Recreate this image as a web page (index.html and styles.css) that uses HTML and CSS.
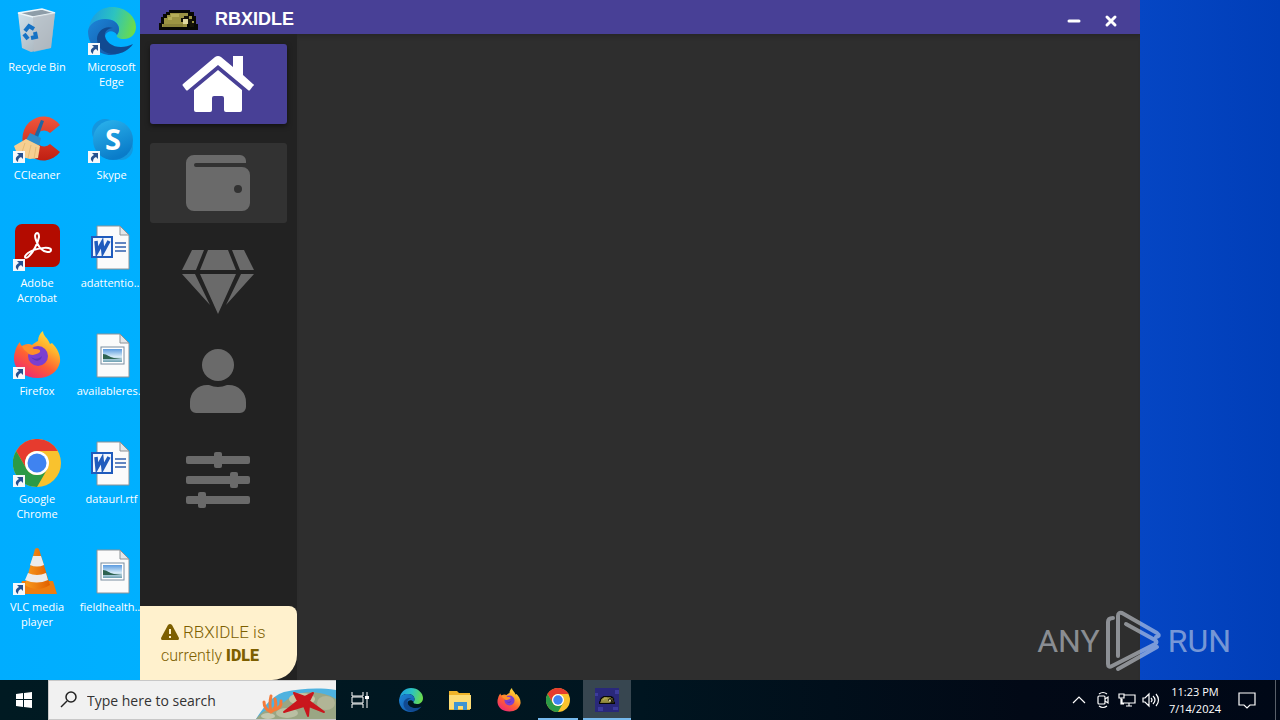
FILE: index.html
```html
<!DOCTYPE html>
<html lang="en">
<head>
<meta charset="utf-8">
<title>RBXIDLE</title>
<link rel="stylesheet" href="styles.css">
</head>
<body>
<svg class="defs" aria-hidden="true">
  <defs>
    <linearGradient id="edgeTop" x1="0" y1="0.3" x2="1" y2="0.5"><stop offset="0" stop-color="#1b9de2"/><stop offset=".5" stop-color="#2cc3c0"/><stop offset="1" stop-color="#6bdc4a"/></linearGradient>
    <linearGradient id="edgeMid" x1="0" y1="0" x2="1" y2="1"><stop offset="0" stop-color="#1d86d8"/><stop offset="1" stop-color="#1254a4"/></linearGradient>
    <linearGradient id="foxBody" x1="0.9" y1="0" x2="0.3" y2="1"><stop offset="0" stop-color="#fff04a"/><stop offset=".35" stop-color="#ffb02c"/><stop offset=".65" stop-color="#ff5f33"/><stop offset="1" stop-color="#ee2a72"/></linearGradient>
    <linearGradient id="skype" x1="0" y1="0" x2="0.4" y2="1"><stop offset="0" stop-color="#2cb5ee"/><stop offset="1" stop-color="#0a7cc9"/></linearGradient>
    <linearGradient id="bin" x1="0" y1="0" x2="1" y2="1"><stop offset="0" stop-color="#d3e4ee"/><stop offset="1" stop-color="#9fa9b1"/></linearGradient>
    <linearGradient id="photo" x1="0" y1="0" x2="0" y2="1"><stop offset="0" stop-color="#5b9be0"/><stop offset=".6" stop-color="#d8ecf8"/><stop offset="1" stop-color="#6d9fb0"/></linearGradient>
    <linearGradient id="cone" x1="0" y1="0" x2="1" y2="0"><stop offset="0" stop-color="#f99a1c"/><stop offset="1" stop-color="#e05f00"/></linearGradient>
    <linearGradient id="red" x1="0" y1="0" x2="0" y2="1"><stop offset="0" stop-color="#f0563c"/><stop offset="1" stop-color="#c01f12"/></linearGradient>
    <symbol id="i-edge" viewBox="0 0 48 48">
      <path d="M1 22C2 9 12 0 24 0c14 0 24 10 24 20 0 8-6 12-12 12-5 0-8-2-7-4 1-2 2-3 2-6 0-6-6-10-13-10C9 12 3 16 1 22z" fill="url(#edgeTop)"/>
      <path d="M0 24c1-7 8-12 17-12 8 0 14 4 14 10 0 3-1 4-2 6-3-5-10-5-12 1-2 9 5 17 15 17-3 1-6 2-9 2C10 48 0 38 0 24z" fill="url(#edgeMid)"/>
      <path d="M17 29c-1-4 3-8 8-8-8-3-16 3-16 11 0 9 8 15 17 15 8 0 15-4 19-10-4 2-8 3-12 3-9 0-15-5-16-11z" fill="#114a91"/>
    </symbol>
    <symbol id="i-chrome" viewBox="0 0 48 48">
      <circle cx="24" cy="24" r="24" fill="#f9c22e"/>
      <path d="M3.200 12A24 24 0 0 1 44.800 12H24a12 12 0 0 0-10.400 18z" fill="#e63b2e"/>
      <path d="M3.200 12A24 24 0 0 0 24 48l10.400-18a12 12 0 0 1-20.800 0z" fill="#2b9a47"/>
      <circle cx="24" cy="24" r="12" fill="#fff"/><circle cx="24" cy="24" r="9.500" fill="#3f83f0"/>
    </symbol>
    <symbol id="i-firefox" viewBox="0 0 48 48">
      <path d="M2 21c1-5 3-8 5-10 0 2 1 3 2 4 3-2 7-3 10-1 2-2 4-3 6-4 0-4 2-8 5-10 0 5 5 7 7 13l2-1c5 5 9 12 8 19-2 10-11 16-22 16C11 47 2 39 1 29c0-3 0-6 1-8z" fill="url(#foxBody)"/>
      <circle cx="25" cy="25" r="10" fill="#7b3fd0"/>
      <path d="M9 15c5-1 9 1 12 3 3 0 7 0 6 3-2 2-5 2-7 3-3 0-5-1-6-3-2-1-4-3-5-6z" fill="#ff8f2a"/>
      <path d="M18 26c4 3 8 2 11-1-1 5-6 7-11 1z" fill="#5b35b8"/>
    </symbol>
    <symbol id="i-doc" viewBox="0 0 48 48">
      <path d="M9 3h23l9 9v34H9z" fill="#fbfbfb" stroke="#8c9297" stroke-width="1"/>
      <path d="M32 3v9h9z" fill="#e3e6e8" stroke="#8c9297" stroke-width="1"/>
    </symbol>
    <symbol id="i-word" viewBox="0 0 48 48">
      <use href="#i-doc"/>
      <path d="M27 20h11M27 24h11M27 28h11" stroke="#2f5fae" stroke-width="1.500"/>
      <rect x="3" y="13" width="22" height="22" fill="#1f5bbd"/><rect x="5" y="15" width="18" height="18" fill="#f2f6fc"/>
      <path d="M8 18l1 11 5-9 1 9 6-11" fill="none" stroke="#1f5bbd" stroke-width="3.500"/>
    </symbol>
    <symbol id="i-image" viewBox="0 0 48 48">
      <use href="#i-doc"/>
      <rect x="13" y="16" width="23" height="17" fill="#fff" stroke="#7a8da0" stroke-width="1"/>
      <rect x="15" y="18" width="19" height="13" fill="url(#photo)"/>
      <path d="M15 23c4 0 6 3 11 4l8 1H15z" fill="#2d6250"/>
    </symbol>
    <symbol id="i-shortcut" viewBox="0 0 12 12">
      <path d="M0 0h12v12H0z" fill="#f5f8fb"/><path d="M4 2h6v6L8 6c-2 1-3 2-3 5C2 9 2 6 6 4z" fill="#26518f"/>
    </symbol>
    <symbol id="i-hat" viewBox="0 0 39 22">
      <path d="M10 1h21v2h4v4h2v8h2v6H0v-7h2V8h2V5h3V3h3z" fill="#080805"/>
      <path d="M11 4h18v3h4v5h2v6h-4v-3h-3v3H3v-3h2V9h3V6h3z" fill="#9c9443"/>
      <path d="M12 5h8v3h-7v3H9V8h3z" fill="#b5ad58"/>
      <path d="M22 9h3V7h5v3h3v4h2v4h-4v-3h-6v-2h-3z" fill="#151307"/>
      <path d="M24 10h5v5h-5z" fill="#e0d8a0"/><path d="M4 15h20v3H4z" fill="#8a833b"/>
    </symbol>
  </defs>
</svg>

<main class="desktop">
  <ul class="shortcuts">
    <li><span class="pic"><svg viewBox="0 0 48 48"><path d="M5 6l24-4 13 4-4 35-20 4-9-4z" fill="url(#bin)"/><path d="M5 6l15 4 22-4-13-4z" fill="#8e9da8" stroke="#eef6fa" stroke-width="1.500"/><path d="M20 10l22-4-4 35-17 4z" fill="#b6bdc3" opacity=".6"/><g fill="none" stroke="#1672c4" stroke-width="4"><path d="M12 24l4-5 5 3"/><path d="M22 25l1 5-5 1"/><path d="M15 32l-4-5"/></g></svg></span>Recycle Bin</li>
    <li><span class="pic"><svg><use href="#i-edge"/></svg><svg class="badge"><use href="#i-shortcut"/></svg></span>Microsoft Edge</li>
    <li><span class="pic"><svg viewBox="0 0 48 48"><path d="M47 10A21 22 0 1 0 47 37L37 29A8 8 0 1 1 37 18z" fill="url(#red)"/><path d="M28 5l3 1-7 19-4-1z" fill="#2166a2"/><path d="M17 18l11 5-2 8-13-6z" fill="#2f8dcb"/><path d="M13 24l14 7-2 12-8 1-12-3-4-10z" fill="#f6cf91"/><path d="M12 28l-4 12M18 30l-3 13M23 32l-2 12" stroke="#e6bb77" stroke-width="1"/></svg><svg class="badge"><use href="#i-shortcut"/></svg></span>CCleaner</li>
    <li><span class="pic"><svg viewBox="0 0 48 48"><circle cx="17" cy="17" r="13" fill="#1596de"/><circle cx="33" cy="33" r="12" fill="#1299e0"/><circle cx="25" cy="25" r="20" fill="url(#skype)"/><text x="25" y="35" class="skype-s">S</text></svg><svg class="badge"><use href="#i-shortcut"/></svg></span>Skype</li>
    <li><span class="pic"><svg viewBox="0 0 48 48"><rect x="2" y="1" width="45" height="43" rx="7" fill="#b30b00"/><path d="M24 10c-4 1-1 9 3 15 5 5 11 5 11 2 0-4-16-2-23 3-5 4-3 6 0 4 5-4 10-14 11-20 0-3-1-4-2-4z" fill="none" stroke="#fff" stroke-width="2"/></svg><svg class="badge"><use href="#i-shortcut"/></svg></span>Adobe Acrobat</li>
    <li><span class="pic"><svg><use href="#i-word"/></svg></span>adattentio...</li>
    <li><span class="pic"><svg><use href="#i-firefox"/></svg><svg class="badge"><use href="#i-shortcut"/></svg></span>Firefox</li>
    <li><span class="pic"><svg><use href="#i-image"/></svg></span>availableres...</li>
    <li><span class="pic"><svg><use href="#i-chrome"/></svg><svg class="badge"><use href="#i-shortcut"/></svg></span>Google Chrome</li>
    <li><span class="pic"><svg><use href="#i-word"/></svg></span>dataurl.rtf</li>
    <li><span class="pic"><svg viewBox="0 0 48 48"><path d="M9 34h31l4 13H5z" fill="#ee7d10"/><path d="M22 2q2-2 4 0l11 36q-13 8-25 0z" fill="url(#cone)"/><path d="M20 9h8l3 9q-7 3-14 0zM15 26q9 4 18 0l2 7q-11 5-23 0z" fill="#ecebea"/></svg><svg class="badge"><use href="#i-shortcut"/></svg></span>VLC media player</li>
    <li><span class="pic"><svg><use href="#i-image"/></svg></span>fieldhealth...</li>
  </ul>

  <section class="window">
    <header class="titlebar">
      <svg class="hat"><use href="#i-hat"/></svg>
      <h1>RBXIDLE</h1>
      <button type="button" aria-label="Minimize"><svg viewBox="0 0 16 16"><path d="M3 9h10"/></svg></button>
      <button type="button" aria-label="Close"><svg viewBox="0 0 16 16"><path d="M4 5l8 8M12 5l-8 8"/></svg></button>
    </header>
    <div class="window-body">
      <aside class="sidebar">
        <nav>
          <button type="button" class="nav-item active" aria-label="Home"><svg viewBox="0 0 72 64"><path d="M1 32L33 5q3-2 6 0l12 10V4h10v19l10 9q2 1 0 2l-3 4q-1 1-2 0L36 13 6 38q-1 1-2 0l-3-4q-1-1 0-2z"/><path d="M36 18l24 20v20q0 2-2 2H44q-2 0-2-2V46q0-2-2-2h-8q-2 0-2 2v12q0 2-2 2H14q-2 0-2-2V38z"/></svg></button>
          <button type="button" class="nav-item hover" aria-label="Wallet"><svg viewBox="-4 0 72 64"><path fill-rule="evenodd" d="M8 4h46a6 6 0 0 1 6 6v2H10a2 2 0 0 0 0 4h46a8 8 0 0 1 8 8v28a8 8 0 0 1-8 8H8a8 8 0 0 1-8-8V12a8 8 0 0 1 8-8zm44 30a4 4 0 1 0 0 8 4 4 0 0 0 0-8z"/></svg></button>
          <button type="button" class="nav-item" aria-label="Gems"><svg viewBox="0 0 72 64"><path d="M10 0h12l-8 20H0zM26 0h20l8 20H18zM50 0h12l10 20H58zM0 24h13l15 31zM18 24h36L36 64zM59 24h13L44 55z"/></svg></button>
          <button type="button" class="nav-item" aria-label="Account"><svg viewBox="-8 0 72 64"><circle cx="28" cy="16" r="16"/><path d="M39 36h-2a22 22 0 0 1-18 0h-2A17 17 0 0 0 0 53v5a6 6 0 0 0 6 6h44a6 6 0 0 0 6-6v-5a17 17 0 0 0-17-17z"/></svg></button>
          <button type="button" class="nav-item" aria-label="Settings"><svg viewBox="-4 0 72 64"><rect y="8" width="64" height="8" rx="2"/><rect y="28" width="64" height="8" rx="2"/><rect y="48" width="64" height="8" rx="2"/><rect x="28" y="4" width="8" height="16" rx="2"/><rect x="44" y="24" width="8" height="16" rx="2"/><rect x="12" y="44" width="8" height="16" rx="2"/></svg></button>
        </nav>
        <p class="status" role="status">
          <span class="status-line"><svg viewBox="0 0 18 16"><path d="M9 0q1 0 2 1l7 13q0 2-1 2H1q-1 0-1-2L7 1q1-1 2-1z" fill="#7d5f00"/><path d="M9 5v5M9 12v2" stroke="#fff1cd" stroke-width="2"/></svg><span class="app-name">RBXIDLE is</span></span>
          <span class="status-line"><span>currently</span><strong>IDLE</strong></span>
        </p>
      </aside>
      <div class="content"></div>
    </div>
  </section>

  <div class="watermark"><span>ANY</span><svg viewBox="0 0 56 62"><g fill="none" stroke="currentColor" stroke-width="4" stroke-linejoin="round" stroke-linecap="round"><path d="M7 8q-5 0-5 4v42q0 4 4 2L49 34q3-2 0-4L20 14M12 46V6q0-4 4-3l35 20q4 3-1 4M12 59l39-22"/></g></svg><span>RUN</span></div>
</main>

<footer class="taskbar">
  <button type="button" class="start" aria-label="Start"><svg viewBox="0 0 16 16" width="16" height="16"><path d="M0 2l7-1v6H0zM8 1l8-1v7H8zM0 8h7v7l-7-1zM8 8h8v8l-8-1z" fill="#fff"/></svg></button>
  <label class="search">
    <svg class="glass" viewBox="0 0 18 18"><circle cx="11" cy="6" r="5"/><path d="M7 10l-6 6"/></svg>
    <input type="text" placeholder="Type here to search" aria-label="Search">
    <svg class="beach" viewBox="0 0 80 38"><path d="M0 38C8 26 14 16 28 11c16-3 32-5 52-2v29z" fill="#4fb2df"/><path d="M0 38c6-8 14-12 24-14l12-9c12-6 32-5 44 3v20z" fill="#9aa684"/><ellipse cx="46" cy="18" rx="13" ry="6" fill="#c5c5a4"/><ellipse cx="31" cy="32" rx="11" ry="5" fill="#b9bfa2"/><ellipse cx="70" cy="22" rx="9" ry="7" fill="#b1b596"/><ellipse cx="12" cy="35" rx="7" ry="3" fill="#c4c8b0"/><path d="M15 31q-7-3-7-10M15 31q-2-8 0-16M15 31q7-4 4-13M18 29q8-2 7-9" fill="none" stroke="#f47b3b" stroke-width="3" stroke-linecap="round"/><path d="M38 12l11 4 8-4-4 8 15 11-15-6-1 10-4-10-20 6 14-11z" fill="#c9161d" stroke="#c9161d" stroke-width="2" stroke-linejoin="round"/></svg>
  </label>
  <button type="button" class="task view" aria-label="Task View"><svg viewBox="0 0 18 16" width="18" height="16"><path d="M1 0v4h11V0M1 16v-4h11v4M1 5v6h11V5zM16 0v16" fill="none" stroke="#fff" stroke-width="1"/><path d="M14 4h4v3h-4z" fill="#fff"/></svg></button>
  <div class="tasks">
    <button type="button" class="task" aria-label="Microsoft Edge"><svg><use href="#i-edge"/></svg></button>
    <button type="button" class="task" aria-label="File Explorer"><svg viewBox="0 0 24 24"><path d="M1 3h8l2 2h11v17H1z" fill="#f0b429"/><path d="M1 7h22v14H1z" fill="#fddc75"/><path d="M6 22v-8h13v8h-4v-4h-5v4z" fill="#3f94d2"/></svg></button>
    <button type="button" class="task" aria-label="Firefox"><svg><use href="#i-firefox"/></svg></button>
    <button type="button" class="task open" aria-label="Google Chrome"><svg><use href="#i-chrome"/></svg></button>
    <button type="button" class="task current" aria-label="RBXIDLE"><svg viewBox="0 0 24 24"><rect width="24" height="24" fill="#29287a"/><path d="M0 5h3v3H0zM20 2h4v4h-4zM3 19h5v4H3zM18 19h5v3h-5z" fill="#3c3b9c"/><use href="#i-hat" x="4" y="7" width="16" height="10"/></svg></button>
  </div>
  <div class="tray">
    <button type="button" aria-label="Show hidden icons"><svg viewBox="0 0 18 18"><path d="M3 12l6-6 6 6"/></svg></button>
    <button type="button" aria-label="Meet Now"><svg viewBox="0 0 18 18"><rect x="4" y="5" width="7" height="8" rx="1"/><path d="M11 8l3-2v6l-3-2M5 3q4-3 8 0M5 15q4 3 8 0"/></svg></button>
    <button type="button" aria-label="Network"><svg viewBox="0 0 18 18"><path d="M6 4h11v8H4V8M8 15h6M11 12v3M1 3h5v4H1zM3 7v6h3"/></svg></button>
    <button type="button" aria-label="Volume"><svg viewBox="0 0 18 18"><path d="M1 7h2l4-4v12l-4-4H1zM9 7q2 2 0 4M11 5q4 4 0 8M14 3q5 6 0 12"/></svg></button>
    <time datetime="2024-07-14T23:23">11:23 PM<br>7/14/2024</time>
    <button type="button" class="notes" aria-label="Notifications"><svg viewBox="0 0 18 18"><path d="M1 2h16v12h-5l-3 3-3-3H1z"/></svg></button>
    <span class="peek"></span>
  </div>
</footer>
</body>
</html>
```
FILE: styles.css
```css
* { box-sizing: border-box; }
body {
  margin: 0;
  height: 100vh;
  display: flex;
  flex-direction: column;
  overflow: hidden;
  font-family: "Open Sans", "Noto Sans", sans-serif;
}
button {
  padding: 0;
  border: 0;
  background: none;
  color: inherit;
  display: flex;
  align-items: center;
  justify-content: center;
}
.defs { position: absolute; width: 0; height: 0; }

/* Desktop */
.desktop {
  position: relative;
  flex: 1;
  overflow: hidden;
  background: linear-gradient(90deg, #00adff 0, #00b0ff 12%, #0546c4 89%, #003eb8 100%);
}
.shortcuts {
  list-style: none;
  margin: 0;
  padding: 7px 0 0;
  display: grid;
  grid-template-columns: 74px 75px;
  grid-auto-rows: 108px;
  color: #fff;
  font-size: 11px;
  line-height: 15px;
  text-align: center;
}
.shortcuts li {
  display: flex;
  flex-direction: column;
  align-items: center;
  gap: 4px;
}
.pic { position: relative; width: 48px; height: 48px; }
.pic > svg { display: block; width: 48px; height: 48px; }
.pic > .badge { position: absolute; left: 0; bottom: 0; width: 12px; height: 12px; }
.skype-s { font: bold 29px "Open Sans", sans-serif; fill: #fff; text-anchor: middle; }

/* Application window */
.window {
  position: absolute;
  inset: 0 140px 0 140px;
  display: flex;
  flex-direction: column;
  background: #2e2e2e;
}
.titlebar {
  height: 34px;
  display: flex;
  align-items: center;
  padding: 5px 11px 0 19px;
  background: #484096;
  color: #fff;
}
.hat { width: 39px; height: 22px; }
.titlebar h1 {
  flex: 1;
  margin: 0 0 0 17px;
  font: bold 18px "Liberation Sans", Arial, sans-serif;
}
.titlebar button { width: 37px; height: 28px; }
.titlebar button svg {
  width: 16px;
  height: 16px;
  fill: none;
  stroke: #fff;
  stroke-width: 3;
  stroke-linecap: round;
}
.window-body { flex: 1; display: flex; }
.sidebar {
  width: 157px;
  display: flex;
  flex-direction: column;
  justify-content: space-between;
  background: #222;
}
.sidebar nav {
  display: flex;
  flex-direction: column;
  gap: 19px;
  padding: 10px;
}
.nav-item { height: 80px; padding-right: 1px; border-radius: 3px; }
.nav-item svg { width: 72px; height: 64px; fill: #6a6a6a; }
.nav-item.active { background: #484096; box-shadow: 0 2px 5px rgba(0, 0, 0, .5); }
.nav-item.active svg { fill: #fff; }
.nav-item.hover { background: #323232; }
.status {
  margin: 0;
  padding: 14px 20px 12px 21px;
  border-radius: 0 8px 25px 0;
  background: #fff1cd;
  color: #7d5f00;
  font: 300 16px/24px Roboto, sans-serif;
}
.status-line { display: flex; align-items: center; gap: 4px; }
.status svg { width: 18px; height: 16px; }
.app-name { font-size: 17px; }
.status strong { font-weight: 900; }
.content { flex: 1; box-shadow: inset 0 5px 5px -4px #232323; }

.watermark {
  position: absolute;
  right: 49px;
  bottom: 8px;
  display: flex;
  align-items: center;
  gap: 6px;
  color: rgba(220, 225, 235, .55);
  font: 32px Roboto, sans-serif;
}
.watermark svg { width: 56px; height: 62px; }

/* Taskbar */
.taskbar {
  height: 40px;
  display: flex;
  color: #fff;
  background: linear-gradient(90deg, #001a22, #001520 50%, #020916 80%, #000817);
}
.start { width: 48px; }
.search {
  display: flex;
  align-items: center;
  width: 288px;
  padding-left: 11px;
  background: #f1f1f1;
  border: 1px solid #c8c8c8;
  border-right: 0;
}
.glass { width: 18px; height: 18px; fill: none; stroke: #222; stroke-width: 1.5; }
.search input {
  flex: 1;
  min-width: 0;
  padding: 0 0 0 9px;
  border: 0;
  background: none;
  font: 14px "Open Sans", sans-serif;
}
.search input::placeholder { color: #333; opacity: 1; }
.beach { width: 80px; height: 38px; }
.tasks { display: flex; gap: 1px; padding-left: 3px; }
.task { width: 48px; }
.tasks svg { width: 24px; height: 24px; }
.open { background: linear-gradient(#76b9ed, #76b9ed) center bottom / 40px 2px no-repeat; }
.current { background: linear-gradient(#76b9ed, #76b9ed) center bottom / 48px 2px no-repeat #374650; }
.tray { display: flex; margin-left: auto; }
.tray button { width: 24px; }
.tray svg { width: 18px; height: 18px; fill: none; stroke: #fff; stroke-width: 1.2; }
.tray time {
  width: 64px;
  align-self: center;
  font-size: 11px;
  line-height: 17px;
  text-align: center;
}
.tray .notes { width: 40px; }
.peek { width: 5px; margin-left: 8px; border-left: 1px solid #59606a; }
```
